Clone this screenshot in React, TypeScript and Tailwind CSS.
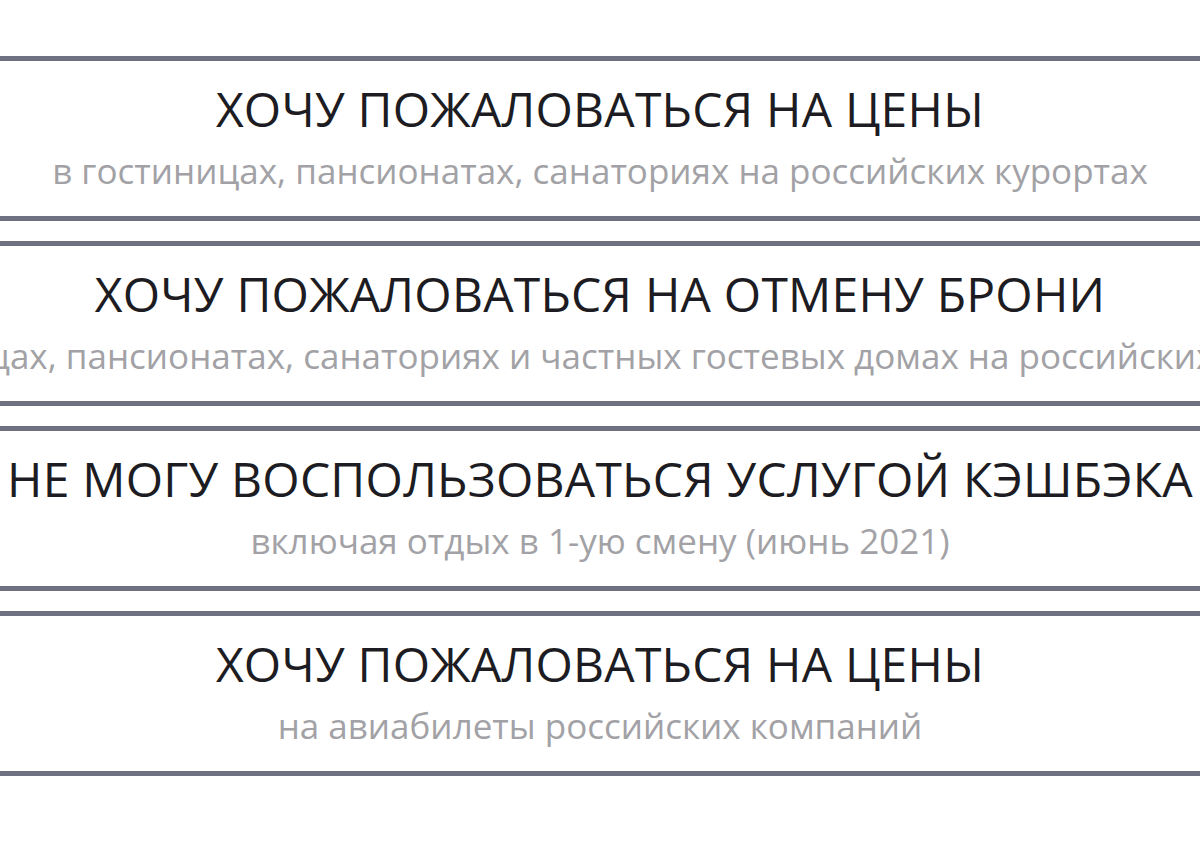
const items = [
  {
    title: "ХОЧУ ПОЖАЛОВАТЬСЯ НА ЦЕНЫ",
    note: "в гостиницах, пансионатах, санаториях на российских курортах",
  },
  {
    title: "ХОЧУ ПОЖАЛОВАТЬСЯ НА ОТМЕНУ БРОНИ",
    note: "в гостиницах, пансионатах, санаториях и частных гостевых домах на российских курортах",
  },
  {
    title: "НЕ МОГУ ВОСПОЛЬЗОВАТЬСЯ УСЛУГОЙ КЭШБЭКА",
    note: "включая отдых в 1-ую смену (июнь 2021)",
  },
  {
    title: "ХОЧУ ПОЖАЛОВАТЬСЯ НА ЦЕНЫ",
    note: "на авиабилеты российских компаний",
  },
];

export default function App() {
  return (
    <main className="min-h-screen bg-white overflow-hidden font-['Open_Sans',sans-serif]">
      <div className="flex flex-col gap-[20px] pt-[56px]">
        {items.map((item, i) => (
          <a
            key={i}
            href="#"
            className="h-[165px] border-y-[5px] border-[#6d7182] flex flex-col items-center pt-[24px] overflow-hidden"
          >
            <span className="whitespace-nowrap text-[48px] leading-none text-[#1c1c22] tracking-[0.005em]">
              {item.title}
            </span>
            <span className="mt-[20px] whitespace-nowrap text-[35px] leading-none text-[#a2a2a6]">
              {item.note}
            </span>
          </a>
        ))}
      </div>
    </main>
  );
}
